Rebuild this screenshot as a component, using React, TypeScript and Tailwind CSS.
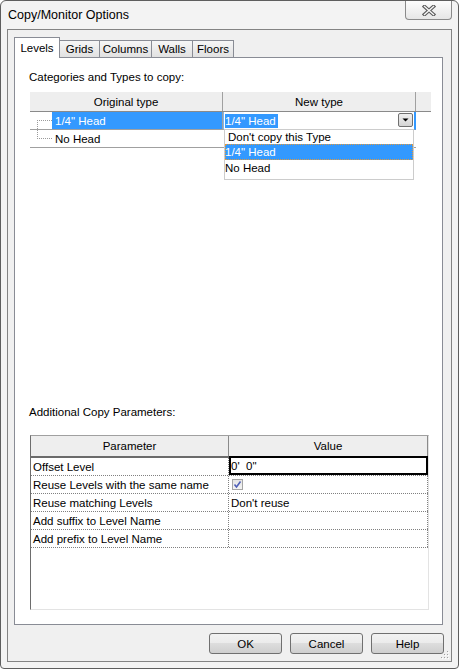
import React from "react";

const Tab = ({ label, w, active }: { label: string; w: string; active?: boolean }) =>
  active ? (
    <div className={`${w} h-[21px] -mb-px relative z-10 bg-white border border-b-0 border-[#898c95] flex items-center justify-center`}>
      {label}
    </div>
  ) : (
    <div
      className={`${w} h-[17px] border-t border-r border-[#898c95] bg-linear-to-b from-[#f6f6f6] to-[#e1e1e1] flex items-center justify-center`}
    >
      {label}
    </div>
  );

const Button = ({ label }: { label: string }) => (
  <div className="w-[73px] h-[21px] rounded-[3px] border border-[#707070] bg-[linear-gradient(#f2f2f2,#ebebeb_50%,#dddddd_50%,#cfcfcf)] flex items-center justify-center">
    {label}
  </div>
);

const Checkbox = () => (
  <div className="w-[11px] h-[11px] border border-[#a5a5a5] bg-linear-to-b from-[#e4e4e4] to-[#f4f4f4] flex items-center justify-center">
    <svg width="9" height="9" viewBox="0 0 9 9">
      <path d="M1.5 4.5 L3.5 7 L7.5 1.5" fill="none" stroke="#4f5fb8" strokeWidth="1.6" />
    </svg>
  </div>
);

const params = [
  "Reuse Levels with the same name",
  "Reuse matching Levels",
  "Add suffix to Level Name",
  "Add prefix to Level Name",
];

export default function App() {
  return (
    <div className="w-[459px] h-[669px] bg-white text-[11.5px] leading-[14px] text-black font-['Liberation_Sans',Arial,sans-serif]">
      <div className="w-full h-full flex flex-col border border-[#5e5e5e] rounded-t-[6px] rounded-b-[4px] bg-[#f3f3f3] px-[6px] pb-[6px]">
        {/* title bar */}
        <div className="h-[28px] flex justify-between">
          <span className="self-center pl-[1px] text-[12.5px] leading-[16px]">Copy/Monitor Options</span>
          <div className="w-[47px] h-[19px] border border-t-0 border-[#8a8a8a] rounded-b-[4px] bg-linear-to-b from-[#fdfdfd] to-[#e6e6e6] flex items-center justify-center">
            <svg width="14" height="11" viewBox="0 0 14 11">
              <path d="M2.5 1.5 L11.5 9.5 M11.5 1.5 L2.5 9.5" stroke="#5b5b5b" strokeWidth="3.6" strokeLinecap="square" />
              <path d="M2.5 1.5 L11.5 9.5 M11.5 1.5 L2.5 9.5" stroke="#f7f7f7" strokeWidth="1.4" strokeLinecap="square" />
            </svg>
          </div>
        </div>

        {/* client area */}
        <div className="flex-1 relative flex flex-col border border-[#838383] bg-[#f0f0f0] pl-[6px] pr-[7px] pt-[7px] pb-[7px]">
          <div className="h-[20px] flex items-end">
            <Tab label="Levels" w="w-[46px]" active />
            <Tab label="Grids" w="w-[40px]" />
            <Tab label="Columns" w="w-[52px]" />
            <Tab label="Walls" w="w-[41px]" />
            <Tab label="Floors" w="w-[41px]" />
          </div>

          <div className="flex-1 mr-[1px] border border-[#898c95] bg-white flex flex-col">
            {/* categories grid */}
            <div className="flex-1 flex flex-col">
              <div className="mt-[12px] ml-[14px]">Categories and Types to copy:</div>
              <div className="mt-[8px] ml-[15px] w-[401px]">
                <div className="flex h-[20px] bg-[#eeeeee] border-b border-[#8a8a8a]">
                  <div className="w-[193px] border-r border-[#a0a0a0] flex items-center justify-center">Original type</div>
                  <div className="w-[193px] border-r border-[#a0a0a0] flex items-center justify-center">New type</div>
                  <div className="flex-1" />
                </div>
                <div className="relative w-[386px]">
                  <svg className="absolute left-0 top-0 pointer-events-none" width="22" height="36" viewBox="0 0 22 36">
                    <path d="M7.5 8 V27 M7 8.5 H22 M7 26.5 H22" stroke="#9a9a9a" strokeWidth="1" strokeDasharray="1 1" fill="none" />
                  </svg>
                  <div className="flex h-[18px]">
                    <div className="w-[193px] h-full pl-[22px] border-b border-r border-[#a0a0a0] flex">
                      <div className="flex-1 bg-[#3399ff] text-white pl-[3px] flex items-center">1/4" Head</div>
                    </div>
                    <div className="w-[193px] h-full relative flex items-center bg-white border-l border-[#7eb4ea] border-r-2 border-r-[#3399ff] border-b border-b-[#a0a0a0] pl-[1px]">
                      <span className="bg-[#3399ff] text-white pr-[2px]">1/4" Head</span>
                      <div className="absolute right-[1px] top-[1px] w-[15px] h-[14px] rounded-[2px] border border-[#707070] bg-linear-to-b from-[#f0f0f0] to-[#d4d4d4] flex items-center justify-center">
                        <svg width="9" height="6" viewBox="0 0 9 6">
                          <path d="M1.5 1.5 H7.5 L4.5 4.5 Z" fill="#000" />
                        </svg>
                      </div>
                      <div className="absolute left-0 top-full w-[190px] h-[51px] z-20 bg-white border border-[#cccccc] flex flex-col">
                        <div className="h-[14px] pl-[3px] flex items-center">Don't copy this Type</div>
                        <div className="h-[16px] bg-[#3399ff] text-white flex items-center outline-1 outline-dotted outline-[#e39a3d] -outline-offset-1">1/4" Head</div>
                        <div className="h-[15px] flex items-center">No Head</div>
                      </div>
                    </div>
                  </div>
                  <div className="flex h-[18px]">
                    <div className="w-[193px] h-full pl-[25px] border-b border-[#a0a0a0] flex items-center">No Head</div>
                    <div className="w-[193px] h-full border-b border-[#a0a0a0]" />
                  </div>
                </div>
              </div>
            </div>

            {/* additional parameters */}
            <div className="pb-[14px]">
              <div className="ml-[14px]">Additional Copy Parameters:</div>
              <div className="mt-[16px] ml-[15px] w-[399px] h-[175px] border border-[#a0a0a0] border-l-[#6d6d6d] border-r-[#e3e3e3] border-b-[#e3e3e3] bg-white">
                <div className="flex h-[22px] bg-[#eeeeee] border-b-2 border-[#6b6b6b]">
                  <div className="w-[198px] border-r border-[#8a8a8a] flex items-center justify-center">Parameter</div>
                  <div className="flex-1 border-r border-[#8a8a8a] flex items-center justify-center">Value</div>
                </div>
                <div className="flex h-[18px] border-b border-dotted border-[#808080]">
                  <div className="w-[198px] pl-[2px] border-r border-dotted border-[#808080] flex items-center">Offset Level</div>
                  <div className="flex-1 -mt-[2px] h-[19px] border-2 border-black flex items-center whitespace-pre">0'  0"</div>
                </div>
                {params.map((p, i) => (
                  <div key={p} className="flex h-[18px] border-b border-dotted border-[#808080]">
                    <div className="w-[198px] pl-[2px] border-r border-dotted border-[#808080] flex items-center">{p}</div>
                    <div className="flex-1 pl-[2px] border-r border-dotted border-[#808080] flex items-center">
                      {i === 0 && (
                        <div className="pl-[1px]">
                          <Checkbox />
                        </div>
                      )}
                      {i === 1 && "Don't reuse"}
                    </div>
                  </div>
                ))}
              </div>
            </div>
          </div>

          <div className="mt-[8px] h-[21px] flex justify-end gap-[8px]">
            <Button label="OK" />
            <Button label="Cancel" />
            <Button label="Help" />
          </div>

          <svg className="absolute right-[1px] bottom-[1px]" width="10" height="10" viewBox="0 0 10 10">
            <g fill="#ffffff">
              <rect x="8" y="2" width="1" height="1" />
              <rect x="5" y="5" width="1" height="1" />
              <rect x="8" y="5" width="1" height="1" />
              <rect x="2" y="8" width="1" height="1" />
              <rect x="5" y="8" width="1" height="1" />
              <rect x="8" y="8" width="1" height="1" />
            </g>
            <g fill="#a0a0a0">
              <rect x="7" y="1" width="1" height="1" />
              <rect x="4" y="4" width="1" height="1" />
              <rect x="7" y="4" width="1" height="1" />
              <rect x="1" y="7" width="1" height="1" />
              <rect x="4" y="7" width="1" height="1" />
              <rect x="7" y="7" width="1" height="1" />
            </g>
          </svg>
        </div>
      </div>
    </div>
  );
}
